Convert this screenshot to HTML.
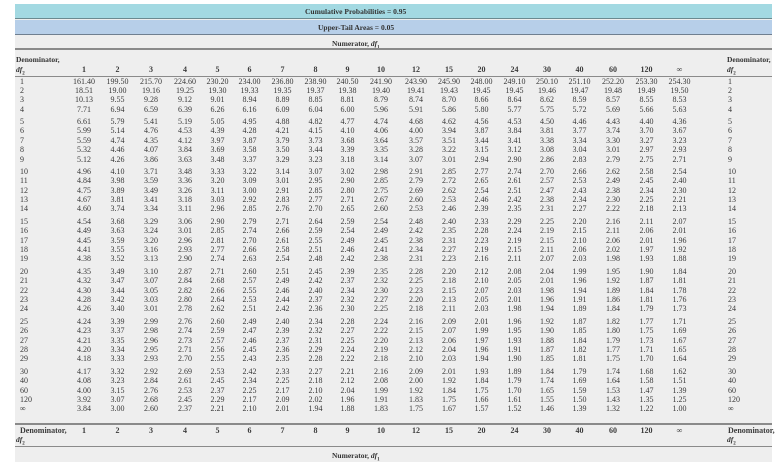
<!DOCTYPE html>
<html><head><meta charset="utf-8"><style>
*{margin:0;padding:0;box-sizing:border-box}
body{width:778px;height:462px;background:#fff;position:relative;overflow:hidden;font-family:"Liberation Serif",serif;color:#3a3a3a;font-size:8px}
.bg{position:absolute;left:15px;top:4px;width:757px;height:458px;background:#eeeeee}
.band{position:absolute;left:15px;width:757px}
.c1{top:4px;height:15px;background:#a3d9e2;border-bottom:1px solid #6b8a90}
.c2{top:20px;height:15px;background:#b7cfe9;border-bottom:1px solid #6f7f90}
.ttl{position:absolute;font-weight:bold;font-size:7.5px;white-space:nowrap;color:#333}
.hl{position:absolute;left:15px;width:757px;background:#8a8a8a}
.row{position:absolute;left:15px;width:757px;display:grid;grid-template-columns:52px 34px 33px 34px 34px 31px 33px 33px 33px 31px 36px 34px 32px 33px 33px 32px 33px 34px 33px 33px 32px 45px;height:9.35px;line-height:9.35px;white-space:nowrap}
.row span{text-align:center}
.row span:first-child{text-align:left;padding-left:5px}
.row span:last-child{text-align:left}
.hd{font-weight:bold}
</style></head><body>
<div class="bg"></div>
<div class="band c1"></div>
<div class="band c2"></div>
<div class="ttl" style="left:305px;top:7px">Cumulative Probabilities = 0.95</div>
<div class="ttl" style="left:318px;top:23px">Upper-Tail Areas = 0.05</div>
<div class="ttl" style="left:332px;top:39px">Numerator, <i>df</i><sub style="font-size:5px">1</sub></div>
<div class="hl" style="top:48px;height:2px"></div>
<div class="ttl" style="left:16px;top:55px">Denominator,</div>
<div class="ttl" style="left:16px;top:65px"><i>df</i><sub style="font-size:5px">2</sub></div>
<div class="ttl" style="left:727px;top:55px">Denominator,</div>
<div class="ttl" style="left:727px;top:65px"><i>df</i><sub style="font-size:5px">2</sub></div>
<div class="row hd" style="top:64.5px"><span></span><span>1</span><span>2</span><span>3</span><span>4</span><span>5</span><span>6</span><span>7</span><span>8</span><span>9</span><span>10</span><span>12</span><span>15</span><span>20</span><span>24</span><span>30</span><span>40</span><span>60</span><span>120</span><span>∞</span><span></span><span></span></div>
<div class="hl" style="top:76px;height:1px"></div>

<div style="position:absolute;left:0;top:76.5px;width:778px">
<div class="row" style="top:0px"><span>1</span><span>161.40</span><span>199.50</span><span>215.70</span><span>224.60</span><span>230.20</span><span>234.00</span><span>236.80</span><span>238.90</span><span>240.50</span><span>241.90</span><span>243.90</span><span>245.90</span><span>248.00</span><span>249.10</span><span>250.10</span><span>251.10</span><span>252.20</span><span>253.30</span><span>254.30</span><span></span><span>1</span></div>
<div class="row" style="top:9.35px"><span>2</span><span>18.51</span><span>19.00</span><span>19.16</span><span>19.25</span><span>19.30</span><span>19.33</span><span>19.35</span><span>19.37</span><span>19.38</span><span>19.40</span><span>19.41</span><span>19.43</span><span>19.45</span><span>19.45</span><span>19.46</span><span>19.47</span><span>19.48</span><span>19.49</span><span>19.50</span><span></span><span>2</span></div>
<div class="row" style="top:18.7px"><span>3</span><span>10.13</span><span>9.55</span><span>9.28</span><span>9.12</span><span>9.01</span><span>8.94</span><span>8.89</span><span>8.85</span><span>8.81</span><span>8.79</span><span>8.74</span><span>8.70</span><span>8.66</span><span>8.64</span><span>8.62</span><span>8.59</span><span>8.57</span><span>8.55</span><span>8.53</span><span></span><span>3</span></div>
<div class="row" style="top:28.05px"><span>4</span><span>7.71</span><span>6.94</span><span>6.59</span><span>6.39</span><span>6.26</span><span>6.16</span><span>6.09</span><span>6.04</span><span>6.00</span><span>5.96</span><span>5.91</span><span>5.86</span><span>5.80</span><span>5.77</span><span>5.75</span><span>5.72</span><span>5.69</span><span>5.66</span><span>5.63</span><span></span><span>4</span></div>

<div class="row" style="top:40.6px"><span>5</span><span>6.61</span><span>5.79</span><span>5.41</span><span>5.19</span><span>5.05</span><span>4.95</span><span>4.88</span><span>4.82</span><span>4.77</span><span>4.74</span><span>4.68</span><span>4.62</span><span>4.56</span><span>4.53</span><span>4.50</span><span>4.46</span><span>4.43</span><span>4.40</span><span>4.36</span><span></span><span>5</span></div>
<div class="row" style="top:49.95px"><span>6</span><span>5.99</span><span>5.14</span><span>4.76</span><span>4.53</span><span>4.39</span><span>4.28</span><span>4.21</span><span>4.15</span><span>4.10</span><span>4.06</span><span>4.00</span><span>3.94</span><span>3.87</span><span>3.84</span><span>3.81</span><span>3.77</span><span>3.74</span><span>3.70</span><span>3.67</span><span></span><span>6</span></div>
<div class="row" style="top:59.3px"><span>7</span><span>5.59</span><span>4.74</span><span>4.35</span><span>4.12</span><span>3.97</span><span>3.87</span><span>3.79</span><span>3.73</span><span>3.68</span><span>3.64</span><span>3.57</span><span>3.51</span><span>3.44</span><span>3.41</span><span>3.38</span><span>3.34</span><span>3.30</span><span>3.27</span><span>3.23</span><span></span><span>7</span></div>
<div class="row" style="top:68.65px"><span>8</span><span>5.32</span><span>4.46</span><span>4.07</span><span>3.84</span><span>3.69</span><span>3.58</span><span>3.50</span><span>3.44</span><span>3.39</span><span>3.35</span><span>3.28</span><span>3.22</span><span>3.15</span><span>3.12</span><span>3.08</span><span>3.04</span><span>3.01</span><span>2.97</span><span>2.93</span><span></span><span>8</span></div>
<div class="row" style="top:78px"><span>9</span><span>5.12</span><span>4.26</span><span>3.86</span><span>3.63</span><span>3.48</span><span>3.37</span><span>3.29</span><span>3.23</span><span>3.18</span><span>3.14</span><span>3.07</span><span>3.01</span><span>2.94</span><span>2.90</span><span>2.86</span><span>2.83</span><span>2.79</span><span>2.75</span><span>2.71</span><span></span><span>9</span></div>

<div class="row" style="top:90.55px"><span>10</span><span>4.96</span><span>4.10</span><span>3.71</span><span>3.48</span><span>3.33</span><span>3.22</span><span>3.14</span><span>3.07</span><span>3.02</span><span>2.98</span><span>2.91</span><span>2.85</span><span>2.77</span><span>2.74</span><span>2.70</span><span>2.66</span><span>2.62</span><span>2.58</span><span>2.54</span><span></span><span>10</span></div>
<div class="row" style="top:99.9px"><span>11</span><span>4.84</span><span>3.98</span><span>3.59</span><span>3.36</span><span>3.20</span><span>3.09</span><span>3.01</span><span>2.95</span><span>2.90</span><span>2.85</span><span>2.79</span><span>2.72</span><span>2.65</span><span>2.61</span><span>2.57</span><span>2.53</span><span>2.49</span><span>2.45</span><span>2.40</span><span></span><span>11</span></div>
<div class="row" style="top:109.25px"><span>12</span><span>4.75</span><span>3.89</span><span>3.49</span><span>3.26</span><span>3.11</span><span>3.00</span><span>2.91</span><span>2.85</span><span>2.80</span><span>2.75</span><span>2.69</span><span>2.62</span><span>2.54</span><span>2.51</span><span>2.47</span><span>2.43</span><span>2.38</span><span>2.34</span><span>2.30</span><span></span><span>12</span></div>
<div class="row" style="top:118.6px"><span>13</span><span>4.67</span><span>3.81</span><span>3.41</span><span>3.18</span><span>3.03</span><span>2.92</span><span>2.83</span><span>2.77</span><span>2.71</span><span>2.67</span><span>2.60</span><span>2.53</span><span>2.46</span><span>2.42</span><span>2.38</span><span>2.34</span><span>2.30</span><span>2.25</span><span>2.21</span><span></span><span>13</span></div>
<div class="row" style="top:127.95px"><span>14</span><span>4.60</span><span>3.74</span><span>3.34</span><span>3.11</span><span>2.96</span><span>2.85</span><span>2.76</span><span>2.70</span><span>2.65</span><span>2.60</span><span>2.53</span><span>2.46</span><span>2.39</span><span>2.35</span><span>2.31</span><span>2.27</span><span>2.22</span><span>2.18</span><span>2.13</span><span></span><span>14</span></div>

<div class="row" style="top:140.5px"><span>15</span><span>4.54</span><span>3.68</span><span>3.29</span><span>3.06</span><span>2.90</span><span>2.79</span><span>2.71</span><span>2.64</span><span>2.59</span><span>2.54</span><span>2.48</span><span>2.40</span><span>2.33</span><span>2.29</span><span>2.25</span><span>2.20</span><span>2.16</span><span>2.11</span><span>2.07</span><span></span><span>15</span></div>
<div class="row" style="top:149.85px"><span>16</span><span>4.49</span><span>3.63</span><span>3.24</span><span>3.01</span><span>2.85</span><span>2.74</span><span>2.66</span><span>2.59</span><span>2.54</span><span>2.49</span><span>2.42</span><span>2.35</span><span>2.28</span><span>2.24</span><span>2.19</span><span>2.15</span><span>2.11</span><span>2.06</span><span>2.01</span><span></span><span>16</span></div>
<div class="row" style="top:159.2px"><span>17</span><span>4.45</span><span>3.59</span><span>3.20</span><span>2.96</span><span>2.81</span><span>2.70</span><span>2.61</span><span>2.55</span><span>2.49</span><span>2.45</span><span>2.38</span><span>2.31</span><span>2.23</span><span>2.19</span><span>2.15</span><span>2.10</span><span>2.06</span><span>2.01</span><span>1.96</span><span></span><span>17</span></div>
<div class="row" style="top:168.55px"><span>18</span><span>4.41</span><span>3.55</span><span>3.16</span><span>2.93</span><span>2.77</span><span>2.66</span><span>2.58</span><span>2.51</span><span>2.46</span><span>2.41</span><span>2.34</span><span>2.27</span><span>2.19</span><span>2.15</span><span>2.11</span><span>2.06</span><span>2.02</span><span>1.97</span><span>1.92</span><span></span><span>18</span></div>
<div class="row" style="top:177.9px"><span>19</span><span>4.38</span><span>3.52</span><span>3.13</span><span>2.90</span><span>2.74</span><span>2.63</span><span>2.54</span><span>2.48</span><span>2.42</span><span>2.38</span><span>2.31</span><span>2.23</span><span>2.16</span><span>2.11</span><span>2.07</span><span>2.03</span><span>1.98</span><span>1.93</span><span>1.88</span><span></span><span>19</span></div>

<div class="row" style="top:190.45px"><span>20</span><span>4.35</span><span>3.49</span><span>3.10</span><span>2.87</span><span>2.71</span><span>2.60</span><span>2.51</span><span>2.45</span><span>2.39</span><span>2.35</span><span>2.28</span><span>2.20</span><span>2.12</span><span>2.08</span><span>2.04</span><span>1.99</span><span>1.95</span><span>1.90</span><span>1.84</span><span></span><span>20</span></div>
<div class="row" style="top:199.8px"><span>21</span><span>4.32</span><span>3.47</span><span>3.07</span><span>2.84</span><span>2.68</span><span>2.57</span><span>2.49</span><span>2.42</span><span>2.37</span><span>2.32</span><span>2.25</span><span>2.18</span><span>2.10</span><span>2.05</span><span>2.01</span><span>1.96</span><span>1.92</span><span>1.87</span><span>1.81</span><span></span><span>21</span></div>
<div class="row" style="top:209.15px"><span>22</span><span>4.30</span><span>3.44</span><span>3.05</span><span>2.82</span><span>2.66</span><span>2.55</span><span>2.46</span><span>2.40</span><span>2.34</span><span>2.30</span><span>2.23</span><span>2.15</span><span>2.07</span><span>2.03</span><span>1.98</span><span>1.94</span><span>1.89</span><span>1.84</span><span>1.78</span><span></span><span>22</span></div>
<div class="row" style="top:218.5px"><span>23</span><span>4.28</span><span>3.42</span><span>3.03</span><span>2.80</span><span>2.64</span><span>2.53</span><span>2.44</span><span>2.37</span><span>2.32</span><span>2.27</span><span>2.20</span><span>2.13</span><span>2.05</span><span>2.01</span><span>1.96</span><span>1.91</span><span>1.86</span><span>1.81</span><span>1.76</span><span></span><span>23</span></div>
<div class="row" style="top:227.85px"><span>24</span><span>4.26</span><span>3.40</span><span>3.01</span><span>2.78</span><span>2.62</span><span>2.51</span><span>2.42</span><span>2.36</span><span>2.30</span><span>2.25</span><span>2.18</span><span>2.11</span><span>2.03</span><span>1.98</span><span>1.94</span><span>1.89</span><span>1.84</span><span>1.79</span><span>1.73</span><span></span><span>24</span></div>

<div class="row" style="top:240.4px"><span>25</span><span>4.24</span><span>3.39</span><span>2.99</span><span>2.76</span><span>2.60</span><span>2.49</span><span>2.40</span><span>2.34</span><span>2.28</span><span>2.24</span><span>2.16</span><span>2.09</span><span>2.01</span><span>1.96</span><span>1.92</span><span>1.87</span><span>1.82</span><span>1.77</span><span>1.71</span><span></span><span>25</span></div>
<div class="row" style="top:249.75px"><span>26</span><span>4.23</span><span>3.37</span><span>2.98</span><span>2.74</span><span>2.59</span><span>2.47</span><span>2.39</span><span>2.32</span><span>2.27</span><span>2.22</span><span>2.15</span><span>2.07</span><span>1.99</span><span>1.95</span><span>1.90</span><span>1.85</span><span>1.80</span><span>1.75</span><span>1.69</span><span></span><span>26</span></div>
<div class="row" style="top:259.1px"><span>27</span><span>4.21</span><span>3.35</span><span>2.96</span><span>2.73</span><span>2.57</span><span>2.46</span><span>2.37</span><span>2.31</span><span>2.25</span><span>2.20</span><span>2.13</span><span>2.06</span><span>1.97</span><span>1.93</span><span>1.88</span><span>1.84</span><span>1.79</span><span>1.73</span><span>1.67</span><span></span><span>27</span></div>
<div class="row" style="top:268.45px"><span>28</span><span>4.20</span><span>3.34</span><span>2.95</span><span>2.71</span><span>2.56</span><span>2.45</span><span>2.36</span><span>2.29</span><span>2.24</span><span>2.19</span><span>2.12</span><span>2.04</span><span>1.96</span><span>1.91</span><span>1.87</span><span>1.82</span><span>1.77</span><span>1.71</span><span>1.65</span><span></span><span>28</span></div>
<div class="row" style="top:277.8px"><span>29</span><span>4.18</span><span>3.33</span><span>2.93</span><span>2.70</span><span>2.55</span><span>2.43</span><span>2.35</span><span>2.28</span><span>2.22</span><span>2.18</span><span>2.10</span><span>2.03</span><span>1.94</span><span>1.90</span><span>1.85</span><span>1.81</span><span>1.75</span><span>1.70</span><span>1.64</span><span></span><span>29</span></div>

<div class="row" style="top:290.35px"><span>30</span><span>4.17</span><span>3.32</span><span>2.92</span><span>2.69</span><span>2.53</span><span>2.42</span><span>2.33</span><span>2.27</span><span>2.21</span><span>2.16</span><span>2.09</span><span>2.01</span><span>1.93</span><span>1.89</span><span>1.84</span><span>1.79</span><span>1.74</span><span>1.68</span><span>1.62</span><span></span><span>30</span></div>
<div class="row" style="top:299.7px"><span>40</span><span>4.08</span><span>3.23</span><span>2.84</span><span>2.61</span><span>2.45</span><span>2.34</span><span>2.25</span><span>2.18</span><span>2.12</span><span>2.08</span><span>2.00</span><span>1.92</span><span>1.84</span><span>1.79</span><span>1.74</span><span>1.69</span><span>1.64</span><span>1.58</span><span>1.51</span><span></span><span>40</span></div>
<div class="row" style="top:309.05px"><span>60</span><span>4.00</span><span>3.15</span><span>2.76</span><span>2.53</span><span>2.37</span><span>2.25</span><span>2.17</span><span>2.10</span><span>2.04</span><span>1.99</span><span>1.92</span><span>1.84</span><span>1.75</span><span>1.70</span><span>1.65</span><span>1.59</span><span>1.53</span><span>1.47</span><span>1.39</span><span></span><span>60</span></div>
<div class="row" style="top:318.4px"><span>120</span><span>3.92</span><span>3.07</span><span>2.68</span><span>2.45</span><span>2.29</span><span>2.17</span><span>2.09</span><span>2.02</span><span>1.96</span><span>1.91</span><span>1.83</span><span>1.75</span><span>1.66</span><span>1.61</span><span>1.55</span><span>1.50</span><span>1.43</span><span>1.35</span><span>1.25</span><span></span><span>120</span></div>
<div class="row" style="top:327.75px"><span>∞</span><span>3.84</span><span>3.00</span><span>2.60</span><span>2.37</span><span>2.21</span><span>2.10</span><span>2.01</span><span>1.94</span><span>1.88</span><span>1.83</span><span>1.75</span><span>1.67</span><span>1.57</span><span>1.52</span><span>1.46</span><span>1.39</span><span>1.32</span><span>1.22</span><span>1.00</span><span></span><span>∞</span></div>
</div>

<div class="hl" style="top:423px;height:2px"></div>
<div class="row hd" style="top:426px"><span>Denominator,</span><span>1</span><span>2</span><span>3</span><span>4</span><span>5</span><span>6</span><span>7</span><span>8</span><span>9</span><span>10</span><span>12</span><span>15</span><span>20</span><span>24</span><span>30</span><span>40</span><span>60</span><span>120</span><span>∞</span><span></span><span>Denominator,</span></div>
<div class="ttl" style="left:16px;top:435px"><i>df</i><sub style="font-size:5px">2</sub></div>
<div class="ttl" style="left:727px;top:435px"><i>df</i><sub style="font-size:5px">2</sub></div>
<div class="hl" style="top:446px;height:1px"></div>
<div class="ttl" style="left:332px;top:451px">Numerator, <i>df</i><sub style="font-size:5px">1</sub></div>
</body></html>
